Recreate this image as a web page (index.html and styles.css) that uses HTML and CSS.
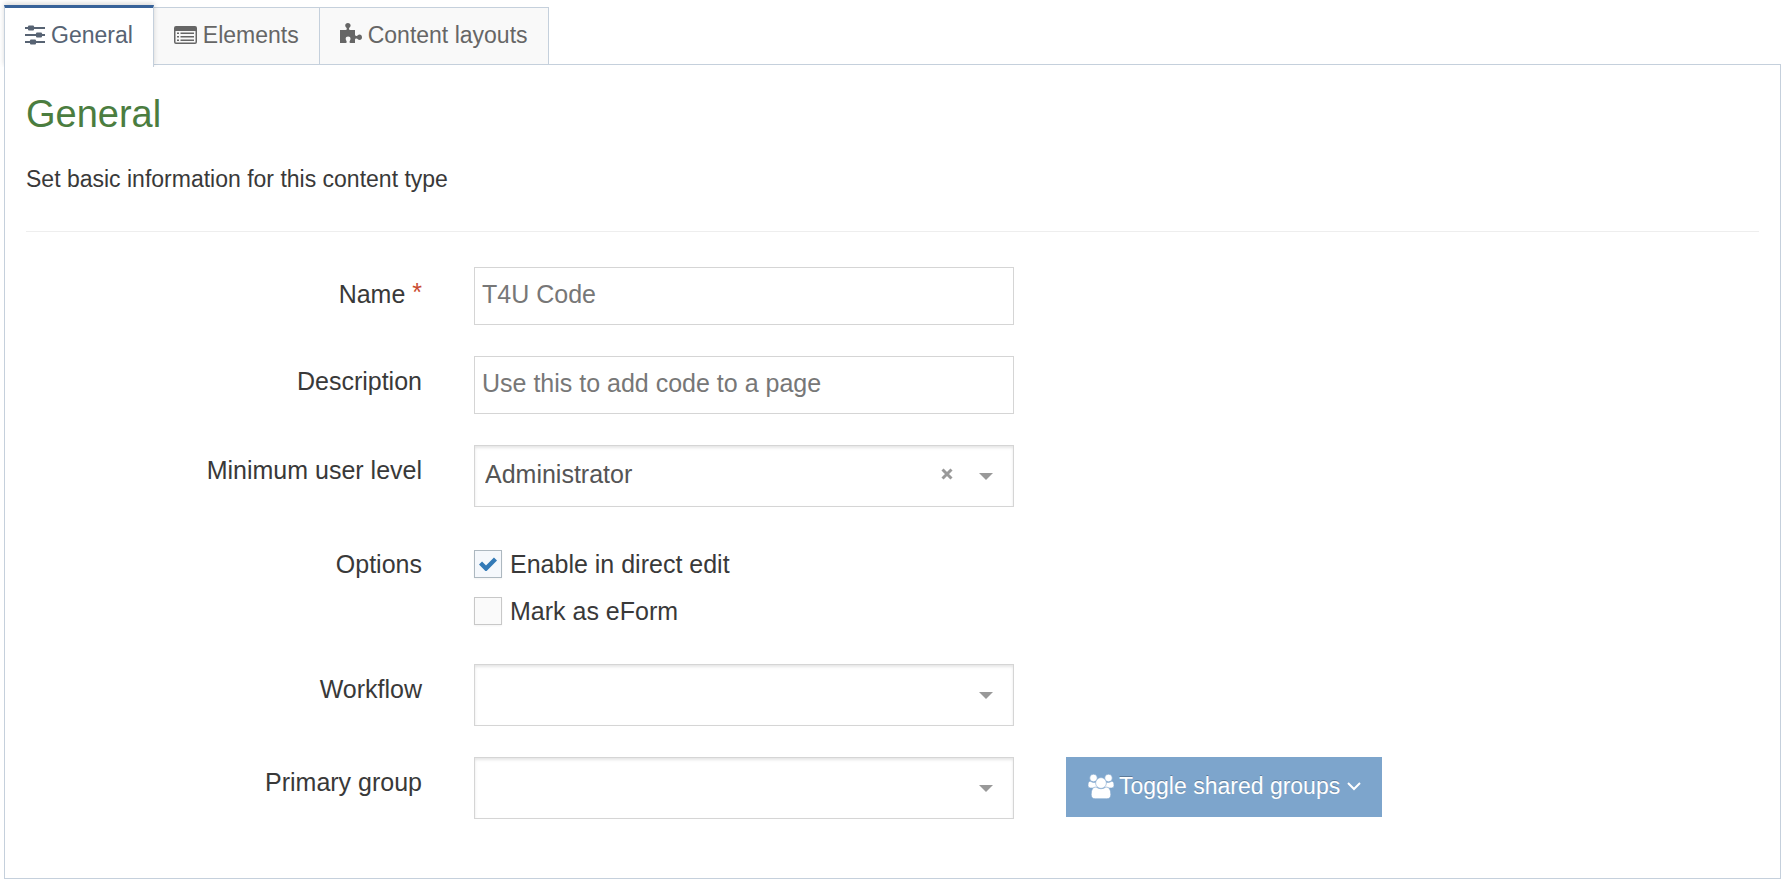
FILE: index.html
```html
<!DOCTYPE html>
<html lang="en">
<head>
<meta charset="utf-8">
<title>Content type - General</title>
<link rel="stylesheet" href="styles.css">
</head>
<body>
<nav class="tabs" aria-label="Content type sections">
  <a class="tab tab-active" href="#general" aria-current="page">
    <svg class="icon icon-sliders" viewBox="0 0 20 20" aria-hidden="true"><path d="M0 2h3v2H0zM9 2h11v2H9zM0 9h11v2H0zM17 9h3v2h-3zM0 16h5v2H0zM11 16h9v2h-9z"/><rect x="3" y="0.500" width="6" height="5" rx="1"/><rect x="11" y="7.500" width="6" height="5" rx="1"/><rect x="5" y="14.500" width="6" height="5" rx="1"/></svg>
    General
  </a>
  <a class="tab" href="#elements">
    <svg class="icon icon-list" viewBox="0 0 23 18" aria-hidden="true"><path fill-rule="evenodd" d="M2 0h19a2 2 0 0 1 2 2v14a2 2 0 0 1-2 2H2a2 2 0 0 1-2-2V2a2 2 0 0 1 2-2zM1.500 5v11q0 .5.5.5h19q.5 0 .5-.5V5z"/><path d="M3 6.500h2V8H3zM6.500 6.500H20V8H6.500zM3 10h2v1.500H3zM6.500 10H20v1.500H6.500zM3 13.500h2V15H3zM6.500 13.500H20V15H6.500z"/></svg>
    Elements
  </a>
  <a class="tab" href="#layouts">
    <svg class="icon icon-puzzle" viewBox="0 0 22 21" aria-hidden="true"><path d="M0 7h5.500q1.500 0 1.300-1.600C6.600 4.300 5.200 4 5.200 2.400 5.200 1 6.300 0 7.900 0s2.700 1 2.700 2.400c0 1.500-1.400 1.900-1.600 3Q8.800 7 10.300 7H15v4.600q0 1.600 1.500 1.400c1.100-.2 1.500-1.600 3-1.600 1.500 0 2.500 1.100 2.500 2.800s-1 2.700-2.500 2.700c-1.500 0-1.900-1.300-3-1.500q-1.500-.2-1.500 1.300V20h-4.500q-1 0-1-1c0-1.200 1-1.600 1-3.200 0-1.400-.9-2.300-2.400-2.300s-2.400.9-2.400 2.300c0 1.600 1 2 1 3.200q0 1-1 1H0z"/></svg>
    Content layouts
  </a>
</nav>
<main class="panel" id="general">
  <h1 class="title">General</h1>
  <p class="intro">Set basic information for this content type</p>
  <hr class="rule">
  <form class="form">
    <div class="row">
      <label class="label" for="name">Name <span class="required">*</span></label>
      <input class="control" id="name" type="text" value="T4U Code" required>
    </div>
    <div class="row">
      <label class="label" for="description">Description</label>
      <input class="control" id="description" type="text" value="Use this to add code to a page">
    </div>
    <div class="row">
      <label class="label" for="level">Minimum user level</label>
      <div class="picker">
        <select class="control select" id="level"><option>Administrator</option></select>
        <button class="clear" type="button" aria-label="Clear minimum user level"><svg class="icon-clear" viewBox="0 0 12 12" aria-hidden="true"><path d="M1.500 1.500l9 9M10.500 1.500l-9 9"/></svg></button>
        <svg class="caret" viewBox="0 0 14 7" aria-hidden="true"><path d="M0 0h14L7 7z"/></svg>
      </div>
    </div>
    <div class="row" role="group" aria-labelledby="options-label">
      <span class="label label-options" id="options-label">Options</span>
      <div class="options">
        <label class="option"><input class="check" type="checkbox" checked>Enable in direct edit</label>
        <label class="option"><input class="check" type="checkbox">Mark as eForm</label>
      </div>
    </div>
    <div class="row">
      <label class="label" for="workflow">Workflow</label>
      <div class="picker">
        <select class="control select" id="workflow"><option></option></select>
        <svg class="caret" viewBox="0 0 14 7" aria-hidden="true"><path d="M0 0h14L7 7z"/></svg>
      </div>
    </div>
    <div class="row">
      <label class="label" for="group">Primary group</label>
      <div class="picker">
        <select class="control select" id="group"><option></option></select>
        <svg class="caret" viewBox="0 0 14 7" aria-hidden="true"><path d="M0 0h14L7 7z"/></svg>
      </div>
      <button class="toggle" type="button">
        <svg class="icon-users" viewBox="0 0 26 25" aria-hidden="true"><circle cx="5.500" cy="4" r="3.800"/><circle cx="20.500" cy="4" r="3.800"/><path d="M2.300 7.300q3.200 2 6 .6L11 13l-3 1H2.500Q0 14 0 11.500 0 7.300 2.300 7.300zM23.700 7.300q-3.200 2-6 .6L15 13l3 1h5.500q2.500 0 2.500-2.500 0-4.200-2.300-4.200z"/><path d="M8 13q5 3.500 10 0 4.800 0 4.800 7.500 0 4.200-4 4.200H7.200q-4 0-4-4.200Q3.200 13 8 13z"/><circle cx="13" cy="9" r="5.400"/></svg>
        Toggle shared groups
        <svg class="icon-down" viewBox="0 0 14 9" aria-hidden="true"><path d="M1 1l6 6 6-6"/></svg>
      </button>
    </div>
  </form>
</main>
</body>
</html>
```
FILE: styles.css
```css
* {
  box-sizing: border-box;
}

body {
  margin: 0;
  padding: 5px 5px 6px 4px;
  background: #fff;
  color: #393939;
  font-family: "Liberation Sans", Arial, sans-serif;
  font-size: 25px;
  line-height: 30px;
}

.tabs {
  display: flex;
  align-items: flex-end;
}

.tab {
  display: flex;
  align-items: center;
  gap: 6px;
  height: 58px;
  margin-left: -1px;
  padding: 0 20px 2px;
  border: 1px solid #c5d0dc;
  background: #f9f9f9;
  color: #666;
  font-size: 23px;
  text-decoration: none;
}

.tab-active {
  z-index: 1;
  height: 62px;
  margin: 0 0 -2px;
  padding-bottom: 6px;
  border-top: 3px solid #376299;
  border-bottom: 0;
  background: #fff;
  color: #576373;
  box-shadow: 0 -2px 5px rgba(0, 0, 0, 0.15);
  clip-path: inset(-8px -8px 0 -8px);
}

.icon {
  fill: currentColor;
}

.icon-sliders {
  width: 20px;
  height: 20px;
}

.icon-list {
  width: 23px;
  height: 18px;
}

.icon-puzzle {
  width: 22px;
  height: 21px;
  margin-bottom: 3px;
}

.panel {
  margin-top: -1px;
  padding: 21px 21px 59px;
  border: 1px solid #c5d0dc;
}

.title {
  margin: 0;
  color: #4b7d3f;
  font-size: 38px;
  font-weight: 400;
  line-height: 56px;
}

.intro {
  margin: 22px 0 0;
  font-size: 23px;
}

.rule {
  height: 1px;
  margin: 37px 0 35px;
  border: 0;
  background: #eee;
}

.form {
  display: flex;
  flex-direction: column;
  gap: 31px;
}

.row {
  display: grid;
  grid-template-columns: 396fr 540fr 693fr;
  column-gap: 52px;
  align-items: start;
}

.label {
  padding-top: 10px;
  text-align: right;
}

.label-options {
  padding-top: 11px;
}

.required {
  color: #c94b32;
  vertical-align: 2px;
}

.control {
  display: block;
  width: 100%;
  height: 58px;
  padding: 0 7px 4px;
  border: 1px solid #d5d5d5;
  border-radius: 0;
  background: #fff;
  color: #777;
  font: inherit;
}

.picker {
  position: relative;
}

.select {
  height: 62px;
  padding: 0 80px 4px 10px;
  color: #555;
  appearance: none;
  box-shadow: inset 0 2px 3px rgba(0, 0, 0, 0.1);
}

.clear {
  position: absolute;
  top: 23px;
  right: 61px;
  display: flex;
  padding: 0;
  border: 0;
  background: none;
}

.icon-clear {
  width: 12px;
  height: 12px;
  fill: none;
  stroke: #999;
  stroke-width: 3;
}

.caret {
  position: absolute;
  top: 28px;
  right: 21px;
  width: 14px;
  height: 7px;
  fill: #999;
  pointer-events: none;
}

.options {
  display: flex;
  flex-direction: column;
  gap: 17px;
  padding: 11px 0 7px;
}

.option {
  display: flex;
  align-items: center;
  gap: 8px;
}

.check {
  width: 28px;
  height: 28px;
  margin: 0;
  border: 1px solid #c8c8c8;
  background: #fafafa center / 18px 14px no-repeat;
  box-shadow: 0 1px 2px rgba(0, 0, 0, 0.05);
  appearance: none;
}

.check:checked {
  border-color: #adb8c0;
  background-color: #f5f8fc;
  background-image: url("data:image/svg+xml,%3Csvg xmlns='http://www.w3.org/2000/svg' viewBox='0 0 18 14'%3E%3Cpath d='M1.500 6l5.500 5.500L16.500 2' fill='none' stroke='%23337ab7' stroke-width='4.400'/%3E%3C/svg%3E");
}

.toggle {
  display: flex;
  justify-self: start;
  align-items: center;
  gap: 5px;
  height: 60px;
  padding: 0 21px 2px 22px;
  border: 0;
  background: #7da5cc;
  color: #fff;
  font: inherit;
  font-size: 23px;
  text-shadow: 0 -1px 0 rgba(0, 0, 0, 0.25);
}

.icon-users {
  width: 26px;
  height: 25px;
  fill: #fff;
  stroke: #7da5cc;
  stroke-width: 0.6;
}

.icon-down {
  width: 14px;
  height: 9px;
  margin-left: 2px;
  fill: none;
  stroke: #fff;
  stroke-width: 2;
}
```
